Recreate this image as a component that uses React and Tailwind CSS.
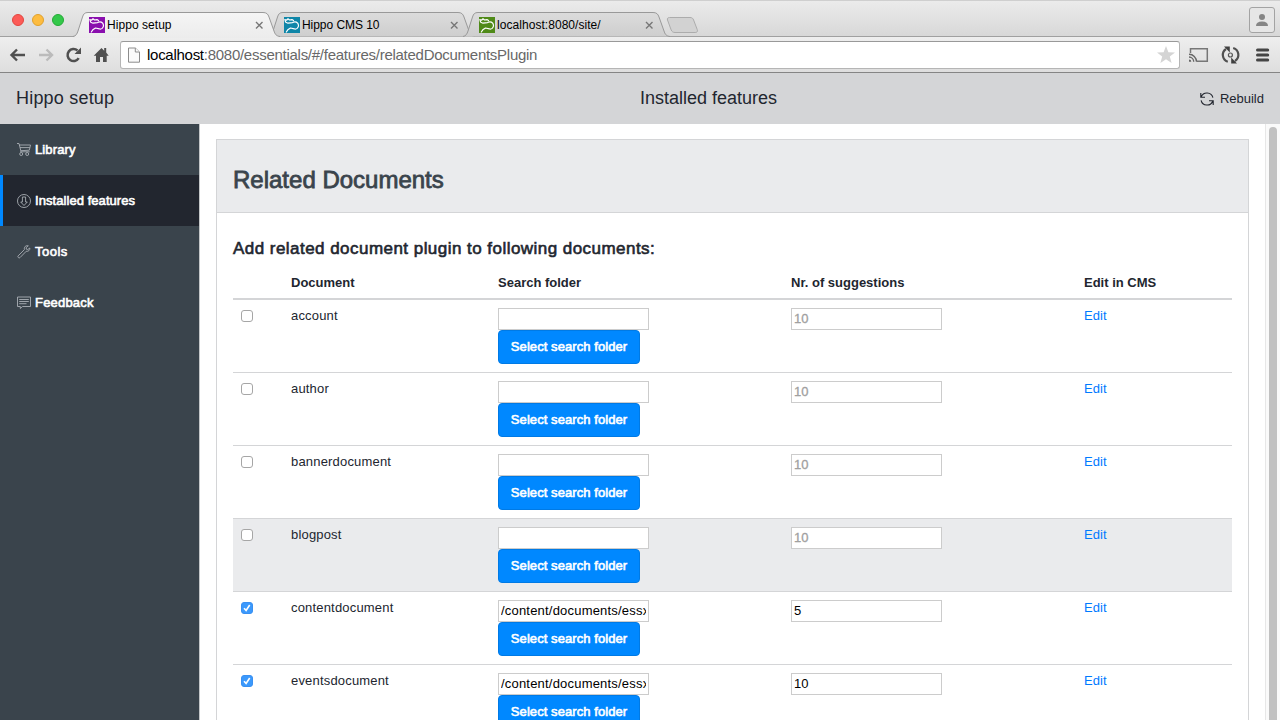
import React from "react";

const tabs = [
  { title: "Hippo setup", color: "#8a0fae", active: true, text: "tracking-[0.05px]" },
  { title: "Hippo CMS 10", color: "#0f86a8", text: "-tracking-[0.05px]" },
  { title: "localhost:8080/site/", color: "#4f8a18", text: "tracking-[0.05px]" },
];

const rows = [
  { name: "account" },
  { name: "author" },
  { name: "bannerdocument" },
  { name: "blogpost", hover: true },
  { name: "contentdocument", checked: true, folder: "/content/documents/essx", count: "5" },
  { name: "eventsdocument", checked: true, folder: "/content/documents/essx", count: "10" },
];

const columns = "grid grid-cols-[50px_207px_293px_293px_156px]";

function HippoMark({ color }) {
  return (
    <svg className="shrink-0" width="16" height="16" viewBox="0 0 16 16" fill="none">
      <rect width="16" height="16" fill={color} />
      <path d="M.8 2.500 2.500 3.200 4 1.800 5.500 3 8 2.600 9.500 3.500M1 3.600 1.800 5.200 4 6.200 8.500 5.600C11 3.800 14.300 5.300 14.500 8.300 14.600 11 12.300 12.600 10.300 11.800L6.500 11 3.800 12.800 2.300 15" stroke="#fff" strokeWidth="1.2" strokeLinejoin="round" strokeLinecap="round" />
    </svg>
  );
}

function Tab({ tab }) {
  return (
    <div className={`relative flex h-[25px] w-[195px] items-center pl-4 pr-[8px] ${tab.active ? "z-10" : ""}`}>
      <svg className="absolute left-0 top-0" width="212" height="26" viewBox="0 0 212 26" fill="none">
        <defs>
          <linearGradient id={tab.active ? "tabOn" : "tabOff"} x1="0" y1="0" x2="0" y2="1">
            <stop offset="0" stopColor={tab.active ? "#f5f5f5" : "#dcdcdc"} />
            <stop offset="1" stopColor={tab.active ? "#ececec" : "#cecece"} />
          </linearGradient>
        </defs>
        <path
          d={tab.active ? "M0 25C3 24 4 22 5 19L9.500 5C10.500 2 11.500.5 15 .5H190C193.500.5 195 2 196 5L201 19C202 22 203 24 207 25V26H0Z" : "M1 24.500C3 24 4 22 5 19L9.500 5C10.500 2 11.500.5 15 .5H190C193.500.5 195 2 196 5L201 19C202 22 203 24 207 24.500Z"}
          fill={tab.active ? "url(#tabOn)" : "url(#tabOff)"}
        />
        <path d="M0 24.500C3 24 4 22 5 19L9.500 5C10.500 2 11.500.5 15 .5H190C193.500.5 195 2 196 5L201 19C202 22 203 24 207 24.500" stroke="#999" />
      </svg>
      <div className="relative flex grow items-center gap-[2px]">
        <HippoMark color={tab.color} />
        <span className={`grow whitespace-nowrap text-[12px] leading-4 text-black ${tab.text}`}>{tab.title}</span>
        <svg className="-mr-[4px]" width="10" height="10" viewBox="0 0 10 10"><path d="m2 2 6.500 6.500M8.500 2 2 8.500" stroke="#777" strokeWidth="1.400" /></svg>
      </div>
    </div>
  );
}

function BrowserChrome() {
  return (
    <div className="flex h-[73px] flex-col border-b border-[#858585] bg-[#e6e6e6]">
      <div className="flex h-9 items-start border-t border-[#cfcfcf] bg-linear-to-b from-[#ebebeb] to-[#d8d8d8]">
        <div className="flex w-[73px] gap-2 pl-3 pt-[13px]">
          <i className="size-3 rounded-full border border-[#e2463f] bg-[#fc5b57]" />
          <i className="size-3 rounded-full border border-[#e0a12d] bg-[#fdbc40]" />
          <i className="size-3 rounded-full border border-[#24aa36] bg-[#34c84a]" />
        </div>
        <div className="flex pt-[11px]">
          {tabs.map((t) => <Tab key={t.title} tab={t} />)}
        </div>
        <svg className="ml-[7px] mt-[15px]" width="34" height="18" viewBox="0 0 34 18"><path d="M4.500 1.500H25c2 0 3 .8 3.600 2.500l3.600 9.500c.8 2-.2 3-2 3H10c-2 0-3-.8-3.800-2.500L2.500 4C2 2.500 2.800 1.500 4.500 1.500Z" fill="#d2d2d2" stroke="#acacac" /></svg>
        <div className="ml-auto mr-[5px] mt-[6px] flex size-[26px] items-center justify-center rounded-[3px] border border-[#a3a3a3] bg-[#e6e6e6]">
          <svg width="14" height="14" viewBox="0 0 14 14" fill="#858585"><circle cx="7" cy="4" r="3" /><path d="M1 13c0-3 2-4.500 6-4.500S13 10 13 13Z" /></svg>
        </div>
      </div>
      <div className="flex h-9 items-center border-t border-[#a0a0a0] bg-linear-to-b from-[#eeeeee] to-[#dedede]">
        <div className="flex w-[120px] shrink-0 pl-[9px]">
          <svg width="110" height="20" viewBox="0 0 110 20" fill="none">
            <path d="M2 10h14M8 4.500 2.500 10 8 15.500" stroke="#505050" strokeWidth="2.400" />
            <path d="M30 10h13M37.500 4.500 43 10l-5.500 5.500" stroke="#bbb" strokeWidth="2.400" />
            <path d="M69.700 13.200A6 6 0 1 1 68.500 5.500" stroke="#505050" strokeWidth="2.500" />
            <path d="M72 2.500V9H65.500Z" fill="#505050" />
            <path d="M84.700 10.800 92.500 3l2.700 2.700V3h2v4.500l2.500 3.300h-2V17H94v-5h-3v5h-4v-6.200Z" fill="#505050" />
          </svg>
        </div>
        <div className="flex h-7 w-[1060px] items-center rounded-[3px] border border-[#b5b5b5] border-t-[#999] bg-white pl-[7px] pr-[4px]">
          <svg width="12" height="16" viewBox="0 0 12 16" fill="#fafafa" stroke="#8c8c8c"><path d="M.5 1h6.800L11.500 5v10.200H.5Z" /><path d="M7.300 1v4h4.200" /></svg>
          <span className="ml-[7px] whitespace-nowrap text-[15px] leading-5 tracking-[-0.27px] text-[#686868]"><span className="text-black">localhost</span>:8080/essentials/#/features/relatedDocumentsPlugin</span>
          <svg className="ml-auto" width="18" height="18" viewBox="0 0 18 18"><path d="m9 0 2.400 6.200 6.600.3-5.200 4.100 1.800 6.400L9 13.300 3.400 17l1.800-6.400L0 6.500l6.600-.3Z" fill="#d4d4d4" /></svg>
        </div>
        <svg className="ml-[8px]" width="84" height="20" viewBox="0 0 84 20" fill="none">
          <path d="M2.500 8V3.700h16.800v12.600H9" stroke="#777" strokeWidth="1.500" />
          <path d="M1 9.200a7.500 7.500 0 0 1 7.500 7.500M1 12a4.700 4.700 0 0 1 4.700 4.700" stroke="#666" strokeWidth="1.400" /><path d="M1 14.500a2.300 2.300 0 0 1 2.300 2.300H1Z" fill="#666" />
          <path d="M39.800 16.800A7.200 7.200 0 0 1 38 4M45.200 3A7.200 7.200 0 0 1 47 16" stroke="#505050" strokeWidth="2.200" />
          <path d="M36 1.500h5.800v6ZM49 18.500h-5.800v-6Z" fill="#404040" />
          <circle cx="42.400" cy="10" r="2" stroke="#555" strokeWidth="1.200" />
          <path d="M69.500 5h10.200M69.500 10h10.200M69.500 15h10.200" stroke="#454545" strokeWidth="3" strokeLinecap="round" />
        </svg>
      </div>
    </div>
  );
}

function NavIcon({ kind }) {
  return (
    <svg width="14" height="14" viewBox="0 0 14 14" fill="none" stroke="#a9afb4" strokeWidth=".9" className="shrink-0">
      {kind === "cart" && <><path d="M0 .5h2L4 8.500M2.200 2h11.300l-1.200 5.200-8.300.5M3 4.600h9.800M3.200 8.800h9.500" /><circle cx="4.200" cy="11" r="1.500" /><circle cx="10.200" cy="11" r="1.500" /></>}
      {kind === "download" && <><circle cx="7" cy="7" r="6.500" /><path d="M5.400 3h3.200v5h1.700L7 11.500 3.700 8h1.700Z" /></>}
      {kind === "wrench" && <path d="M12.800 3 10.700 4.600 9.200 4 9.300 2.400 11.300.8C9 0 6.800 2 7.400 4.600L1.100 10.900c-.9 1 .9 2.700 1.900 1.700L9.200 6.300c2 .5 4-1.200 3.600-3.300Z" />}
      {kind === "chat" && <path d="M.5 1h13v9.500H5.500L3.300 12.500v-2H.5ZM2.200 3.500h9.600M2.200 5.500h9.600M2.200 7.700h7.300" />}
    </svg>
  );
}

function NavItem({ kind, label, active, text }) {
  return (
    <a className={`flex h-[51px] items-center gap-1 border-l-[3px] pl-[14px] ${active ? "border-[#0088ff] bg-[#22262f]" : "border-transparent"}`}>
      <NavIcon kind={kind} />
      <span className={`whitespace-nowrap text-[13px] leading-5 text-white [-webkit-text-stroke:0.6px_white] ${text}`}>{label}</span>
    </a>
  );
}

function Checkbox({ checked }) {
  return (
    <span className={`flex size-3 items-center justify-center rounded-[3px] border ${checked ? "border-[#3990f2] bg-[#3b99fc]" : "border-[#a6a6a6] bg-white"}`}>
      {checked && <svg className="shrink-0" width="10" height="10" viewBox="0 0 10 10" fill="none" stroke="white" strokeWidth="1.600"><path d="m2 5.200 2.100 2.200L7.700 2" /></svg>}
    </span>
  );
}

function Row({ row }) {
  return (
    <div className={`${columns} h-[73px] shrink-0 border-b border-[#d4d5d7] pt-2 text-[13px] leading-4 text-[#22262f] ${row.hover ? "bg-[#eaebed]" : ""}`}>
      <div className="pl-2 pt-[2px]"><Checkbox checked={row.checked} /></div>
      <div className="pl-2 tracking-[0.18px]">{row.name}</div>
      <div className="pl-2">
        <div className="flex h-[22px] w-[151px] items-center border border-[#ccc] bg-white px-[2px] text-black">
          <span className="w-full overflow-hidden whitespace-nowrap tracking-[0.2px]">{row.folder}</span>
        </div>
        <button className="flex h-[34px] w-[142px] items-center justify-center whitespace-nowrap rounded-[4px] border border-[#007ae5] bg-[#0088ff] text-[13px] leading-4 tracking-[0.07px] text-white [-webkit-text-stroke:0.6px_white]">Select search folder</button>
      </div>
      <div className="pl-2">
        <div className={`flex h-[22px] w-[151px] items-center border border-[#ccc] bg-white px-[2px] ${row.count ? "text-black" : "text-[#a0a0a0] [-webkit-text-stroke:0.3px_#a0a0a0]"}`}>{row.count || "10"}</div>
      </div>
      <div className="pl-2 tracking-[0.1px] text-[#007aff]">Edit</div>
    </div>
  );
}

export default function App() {
  return (
    <div className="flex h-[720px] w-[1280px] flex-col overflow-hidden bg-white font-['Liberation_Sans',Arial,sans-serif]">
      <BrowserChrome />
      <header className="grid h-[51px] shrink-0 grid-cols-[640px_1fr_auto] items-center bg-[#d4d5d7] pr-4 text-[#22262f]">
        <span className="pb-[2px] pl-4 text-[18px] leading-6 tracking-[0.2px]">Hippo setup</span>
        <span className="pb-[2px] text-[18px] leading-6">Installed features</span>
        <span className="flex items-center gap-[6px] text-[13px] leading-5">
          <svg width="14" height="14" viewBox="0 0 14 14" fill="none" stroke="#22262f" strokeWidth="1.100"><path d="M.8 1v4.200H5M1.200 5a6.100 6.100 0 0 1 11.700.7M13.200 13V8.800H9M12.800 9A6.100 6.100 0 0 1 1.100 8.300" /></svg>
          Rebuild
        </span>
      </header>
      <div className="flex min-h-0 grow">
        <nav className="w-[200px] shrink-0 border-r border-[#c4c7c9] bg-[#3a444c]">
          <NavItem kind="cart" label="Library" text="tracking-[0.12px]" />
          <NavItem kind="download" label="Installed features" text="tracking-[0.06px]" active />
          <NavItem kind="wrench" label="Tools" text="tracking-[0.5px]" />
          <NavItem kind="chat" label="Feedback" text="tracking-[0.2px]" />
        </nav>
        <main className="flex grow overflow-hidden pl-4 pt-[15px]">
          <section className="flex h-[640px] w-[1033px] flex-col border border-[#d4d5d7]">
            <div className="flex h-[73px] shrink-0 items-center border-b border-[#d4d5d7] bg-[#eaebed] px-4 pt-2">
              <h1 className="whitespace-nowrap text-[24px] leading-8 text-[#3a444c] [-webkit-text-stroke:0.8px_#3a444c]">Related Documents</h1>
            </div>
            <div className="flex flex-col px-4 pt-6">
              <h2 className="whitespace-nowrap text-[17px] leading-6 tracking-[0.46px] text-[#22262f] [-webkit-text-stroke:0.6px_#22262f]">Add related document plugin to following documents:</h2>
              <div className={`${columns} mt-[3px] h-[36px] shrink-0 border-b-2 border-[#d4d5d7] pt-[11px] text-[13px] font-bold leading-4 text-[#22262f]`}>
                <span />
                <span className="pl-2">Document</span>
                <span className="pl-2">Search folder</span>
                <span className="pl-2">Nr. of suggestions</span>
                <span className="pl-2">Edit in CMS</span>
              </div>
              {rows.map((r) => <Row key={r.name} row={r} />)}
            </div>
          </section>
        </main>
        <div className="flex w-[15px] shrink-0 justify-center border-l border-[#e7e7e7] bg-[#fafafa] pt-[3px]">
          <div className="h-[650px] w-2 rounded-full bg-[#c1c1c1]" />
        </div>
      </div>
    </div>
  );
}
